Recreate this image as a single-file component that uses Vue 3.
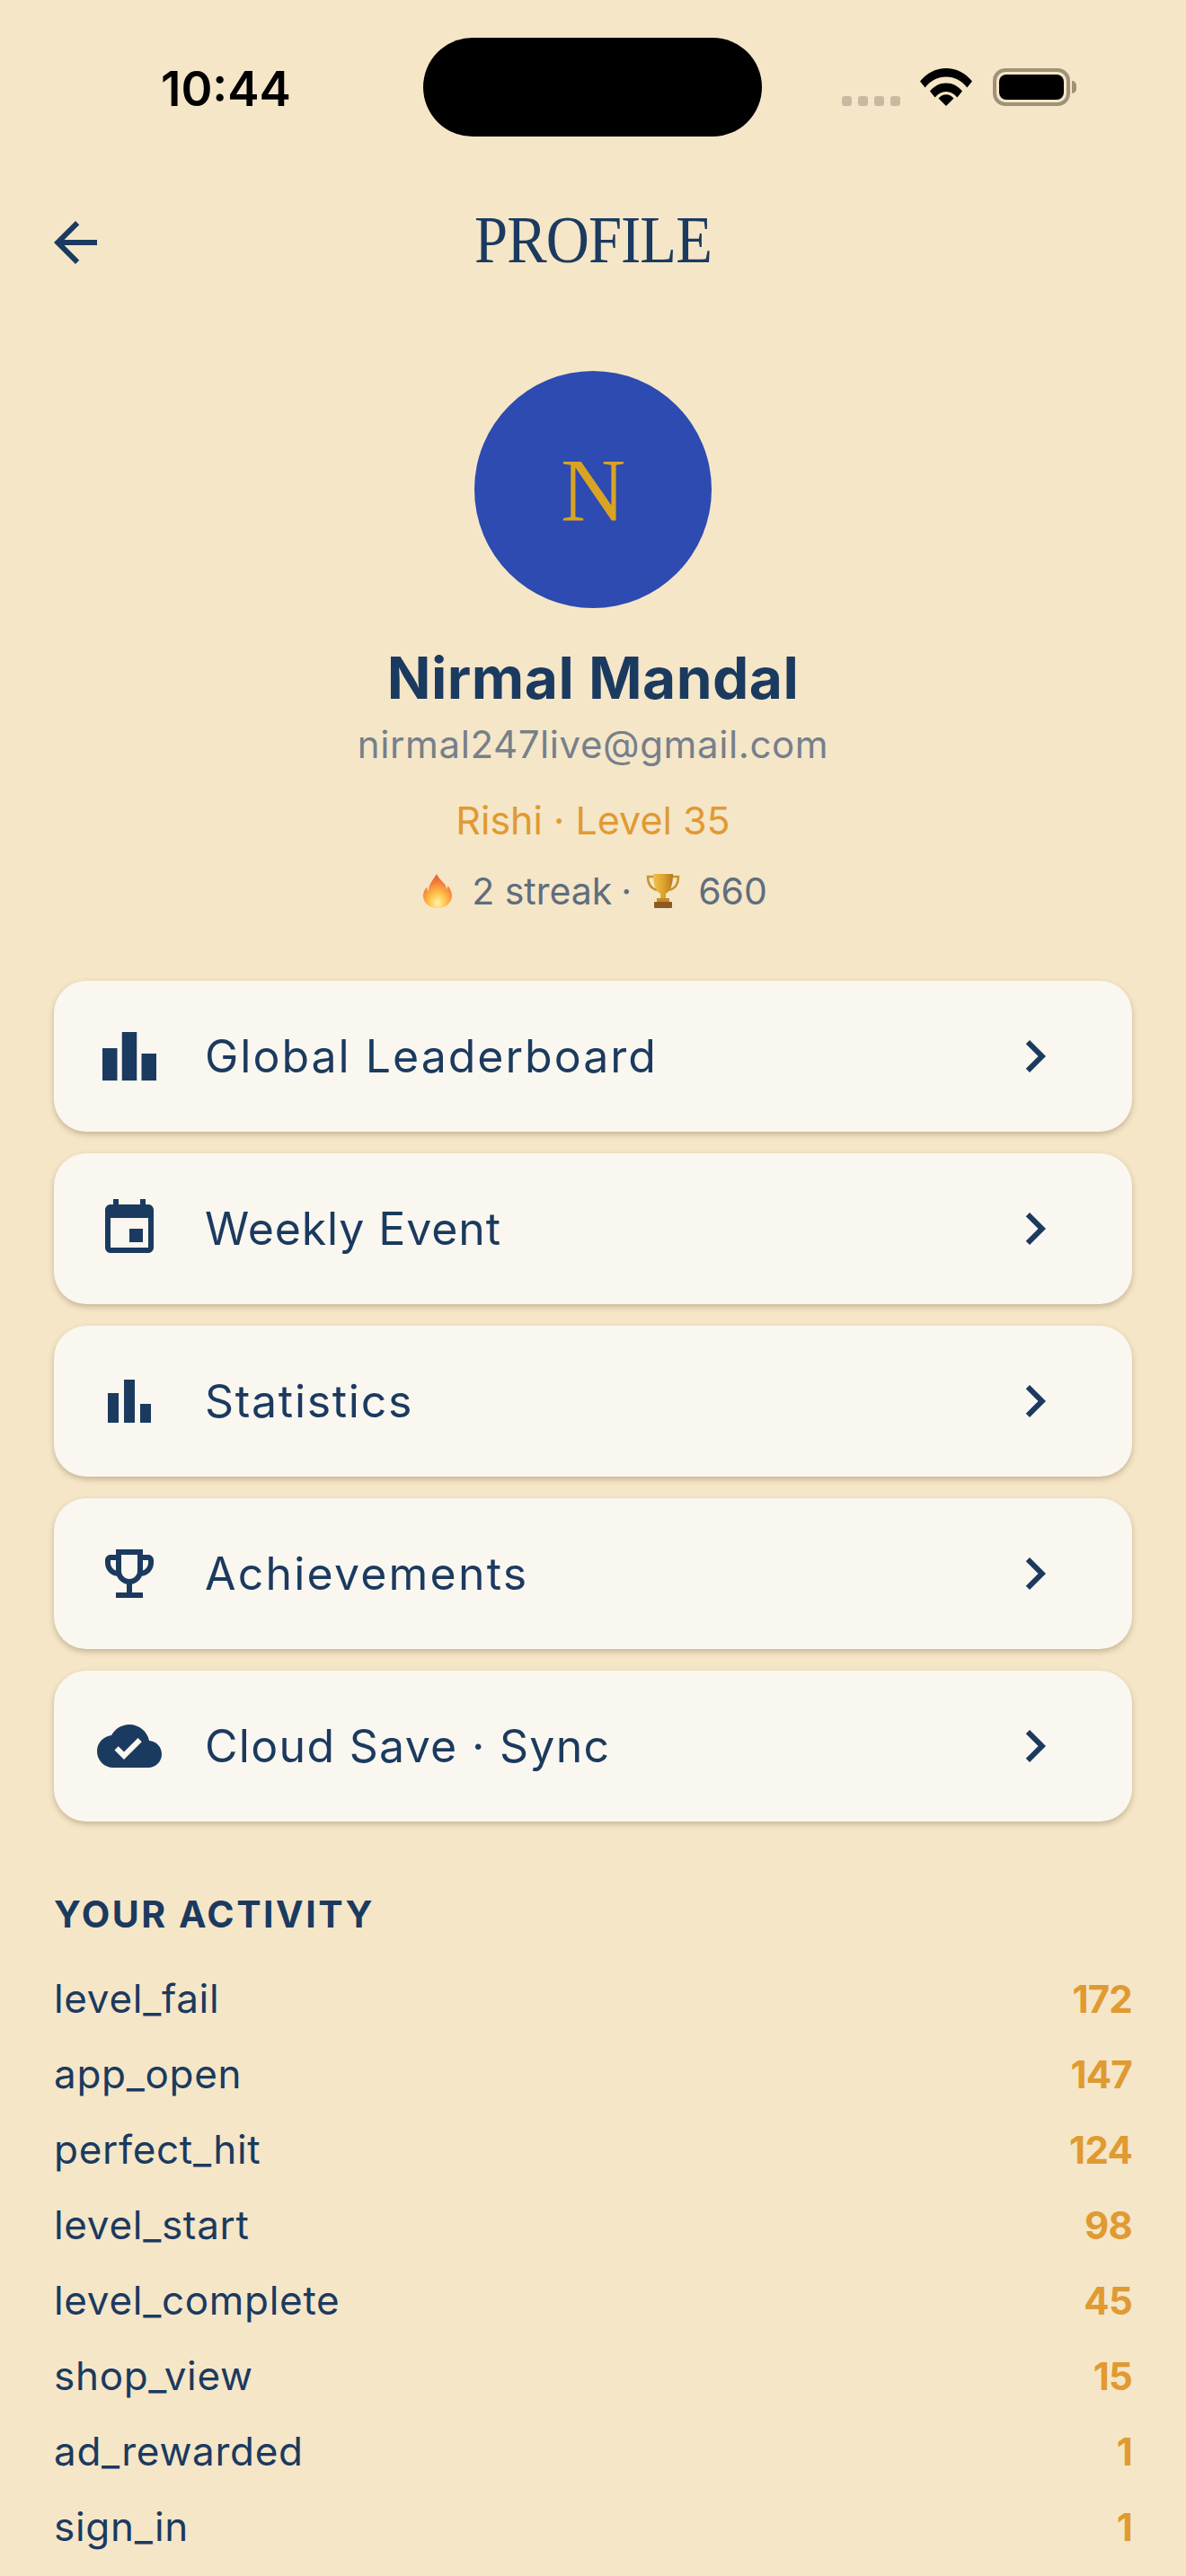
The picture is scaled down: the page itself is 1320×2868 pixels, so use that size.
<template>
  <div class="screen">
    <!-- status bar -->
    <div class="status-bar">
      <span class="clock">10:44</span>
      <div class="island"></div>
      <div class="status-icons">
        <div class="signal">
          <i v-for="n in 4" :key="n"></i>
        </div>
        <svg class="wifi" width="58" height="42" viewBox="0 0 58 42">
          <path d="M0 14.5C7.6 5 18 0 29 0s21.4 5 29 14.5l-5.6 7C46.2 13.8 38 9.6 29 9.6S11.800 13.800 5.600 21.500z" />
          <path d="M11 25.500C15.600 19.800 22 16.500 29 16.500s13.400 3.300 18 9l-5.600 6.900C38 28.300 33.800 26 29 26s-9 2.300-12.400 6.400z" />
          <path d="M20.500 33.500C22.800 30.800 25.800 29.300 29 29.300s6.200 1.500 8.500 4.200L29 42z" />
        </svg>
        <div class="battery">
          <div class="battery-level"></div>
          <div class="battery-nub"></div>
        </div>
      </div>
    </div>

    <!-- header -->
    <header class="top-bar">
      <svg class="back" viewBox="0 0 24 24" width="72" height="72">
        <path d="M20 11H7.830l5.590-5.590L12 4l-8 8 8 8 1.410-1.410L7.830 13H20v-2z" />
      </svg>
      <h1 class="title">PROFILE</h1>
    </header>

    <!-- profile -->
    <section class="profile">
      <div class="avatar">N</div>
      <h2 class="name">Nirmal Mandal</h2>
      <p class="email">nirmal247live@gmail.com</p>
      <p class="rank">Rishi · Level 35</p>
      <p class="streak">
        <svg class="emoji flame" width="32" height="38" viewBox="0 0 34 38" preserveAspectRatio="none">
          <defs>
            <radialGradient id="flameFill" cx="0.5" cy="0.85" r="0.85">
              <stop offset="0" stop-color="#fff3a8" />
              <stop offset="0.35" stop-color="#ffc24a" />
              <stop offset="0.7" stop-color="#f5803a" />
              <stop offset="1" stop-color="#e2553a" />
            </radialGradient>
          </defs>
          <path fill="url(#flameFill)" d="M16 0c2 5 7 8 10 12 1 1.500 1.500 3 1.500 5 1-1 1.500-2.500 1.500-4 3 3.500 5 7 5 11.500C34 32 27 38 17 38S0 32 0 24.500c0-4.500 2-7.500 4.500-10 0 2 .5 3.500 2 4.500C6 12 11 7.500 16 0z" />
        </svg>
        <span class="streak-text">2 streak</span>
        <span class="streak-dot">·</span>
        <svg class="emoji cup" width="38" height="40" viewBox="0 0 38 40">
          <defs>
            <linearGradient id="cupFill" x1="0" x2="1" y1="0" y2="0">
              <stop offset="0" stop-color="#f0c04e" />
              <stop offset="0.5" stop-color="#e0a52e" />
              <stop offset="1" stop-color="#b57a1c" />
            </linearGradient>
          </defs>
          <path fill="none" stroke="#c9952a" stroke-width="2.500" d="M9 4H2c0 7 3 13 10 15M29 4h7c0 7-3 13-10 15" />
          <path fill="url(#cupFill)" d="M8 1h22c0 10-2 19-8 22v5h-6v-5C10 20 8 11 8 1z" />
          <rect x="12" y="28" width="14" height="4" fill="#c48c28" />
          <rect x="9" y="32" width="20" height="7" rx="1" fill="#8f5a22" />
        </svg>
        <span class="streak-text">660</span>
      </p>
    </section>

    <!-- menu -->
    <nav class="menu">
      <div v-for="item in menu" :key="item.label" class="card">
        <svg class="card-icon" viewBox="0 0 24 24" width="72" height="72">
          <path :d="item.icon" />
        </svg>
        <span class="card-label" :style="{ letterSpacing: item.spacing }">{{ item.label }}</span>
        <svg class="chevron" viewBox="0 0 24 24" width="72" height="72">
          <path d="M10 6L8.590 7.410 13.170 12l-4.580 4.590L10 18l6-6z" />
        </svg>
      </div>
    </nav>

    <!-- activity -->
    <section class="activity">
      <h3 class="activity-title">YOUR ACTIVITY</h3>
      <div v-for="row in activity" :key="row.name" class="activity-row">
        <span class="activity-name">{{ row.name }}</span>
        <span class="activity-count">{{ row.count }}</span>
      </div>
    </section>
  </div>
</template>

<script setup>
const menu = [
  {
    label: 'Global Leaderboard',
    spacing: '2px',
    icon: 'M7.500 21H2V9h5.500v12zm7.250-18h-5.500v18h5.500V3zM22 11h-5.500v10H22V11z'
  },
  {
    label: 'Weekly Event',
    spacing: '0.9px',
    icon: 'M17 12h-5v5h5v-5zM16 1v2H8V1H6v2H5c-1.110 0-1.990.9-1.990 2L3 19c0 1.100.89 2 2 2h14c1.100 0 2-.9 2-2V5c0-1.100-.9-2-2-2h-1V1h-2zm3 18H5V8h14v11z'
  },
  {
    label: 'Statistics',
    spacing: '1.7px',
    icon: 'M4 9h4v11H4zM16 13h4v7h-4zM10 4h4v16h-4z'
  },
  {
    label: 'Achievements',
    spacing: '2.2px',
    icon: 'M19 5h-2V3H7v2H5c-1.100 0-2 .9-2 2v1c0 2.550 1.920 4.630 4.390 4.940.63 1.500 1.980 2.630 3.610 2.960V19H7v2h10v-2h-4v-3.100c1.630-.33 2.980-1.460 3.610-2.960C19.080 12.630 21 10.550 21 8V7c0-1.100-.9-2-2-2zM5 8V7h2v3.820C5.840 10.400 5 9.300 5 8zm7 6c-1.650 0-3-1.350-3-3V5h6v6c0 1.650-1.350 3-3 3zm7-6c0 1.300-.84 2.400-2 2.820V7h2v1z'
  },
  {
    label: 'Cloud Save · Sync',
    spacing: '1.3px',
    icon: 'M19.350 10.040C18.670 6.590 15.640 4 12 4 9.110 4 6.600 5.640 5.350 8.040 2.340 8.360 0 10.910 0 14c0 3.310 2.690 6 6 6h13c2.760 0 5-2.240 5-5 0-2.640-2.050-4.780-4.650-4.960zM10 17l-3.500-3.500 1.410-1.410L10 14.170 15.180 9l1.410 1.410L10 17z'
  }
]

const activity = [
  { name: 'level_fail', count: 172 },
  { name: 'app_open', count: 147 },
  { name: 'perfect_hit', count: 124 },
  { name: 'level_start', count: 98 },
  { name: 'level_complete', count: 45 },
  { name: 'shop_view', count: 15 },
  { name: 'ad_rewarded', count: 1 },
  { name: 'sign_in', count: 1 }
]
</script>

<style>
html, body {
  margin: 0;
  background: #f5e6c8;
}
</style>

<style scoped>
.screen {
  width: 1320px;
  height: 2868px;
  overflow: hidden;
  background: #f5e6c8;
  color: #1b3a5f;
  font-family: Inter, 'Noto Sans', sans-serif;
}

/* status bar */
.status-bar {
  display: flex;
  align-items: center;
  height: 110px;
  padding-top: 42px;
}
.clock {
  width: 471px;
  box-sizing: border-box;
  padding-left: 179px;
  font-size: 53px;
  font-weight: 600;
  color: #000;
  line-height: 110px;
  margin-top: 3px;
}
.island {
  width: 377px;
  height: 110px;
  border-radius: 55px;
  background: #000;
}
.status-icons {
  display: flex;
  align-items: flex-end;
  margin-left: 89px;
  height: 42px;
  margin-top: -1px;
}
.signal {
  display: flex;
  gap: 7px;
  margin-bottom: 0;
  width: 87px;
}
.signal i {
  width: 11px;
  height: 11px;
  border-radius: 3px;
  background: #c9b9a0;
}
.wifi {
  fill: #000;
  margin-right: 23px;
}
.battery {
  position: relative;
  box-sizing: border-box;
  width: 86px;
  height: 42px;
  border: 4px solid #a09278;
  border-radius: 14px;
  padding: 3px;
}
.battery-level {
  height: 100%;
  background: #000;
  border-radius: 8px;
}
.battery-nub {
  position: absolute;
  right: -11px;
  top: 10px;
  width: 5px;
  height: 14px;
  background: #a09278;
  border-radius: 0 5px 5px 0;
}

/* header */
.top-bar {
  position: relative;
  display: flex;
  align-items: center;
  height: 120px;
  margin-top: 58px;
  padding-left: 48px;
}
.back {
  fill: #1b3a5f;
}
.title {
  position: absolute;
  left: 0;
  right: 0;
  margin: 0;
  padding-bottom: 6px;
  text-align: center;
  font-family: 'Liberation Serif', serif;
  font-size: 74px;
  font-weight: 400;
  letter-spacing: -1px;
  transform: scaleX(0.9);
  color: #1b3a5f;
}

/* profile */
.profile {
  display: flex;
  flex-direction: column;
  align-items: center;
  margin-top: 83px;
}
.avatar {
  display: flex;
  align-items: center;
  justify-content: center;
  width: 264px;
  height: 264px;
  border-radius: 50%;
  background: #2d4bb0;
  color: #d9a323;
  font-family: 'Liberation Serif', serif;
  font-size: 100px;
}
.name {
  margin: 38px 0 0;
  font-size: 64px;
  line-height: 80px;
  font-weight: 700;
  letter-spacing: 0.5px;
  color: #1b3a5f;
}
.email {
  margin: 4px 0 0;
  font-size: 42px;
  line-height: 60px;
  letter-spacing: 0.6px;
  color: #76808a;
}
.rank {
  margin: 24px 0 0;
  font-size: 43px;
  line-height: 60px;
  color: #e09a32;
}
.streak {
  display: flex;
  align-items: center;
  margin: 21px 0 0;
  padding-left: 5px;
  font-size: 41px;
  line-height: 56px;
  color: #5f6e7c;
}
.flame {
  margin-right: 22px;
}
.streak-dot {
  margin: 0 16px 0 10px;
}
.cup {
  margin-right: 20px;
}

/* menu */
.menu {
  display: flex;
  flex-direction: column;
  gap: 24px;
  margin: 72px 60px 0;
}
.card {
  display: flex;
  align-items: center;
  height: 168px;
  padding: 0 72px 0 48px;
  border-radius: 36px;
  background: #faf7f0;
  box-shadow: 0 3px 6px rgba(90, 70, 30, 0.3);
}
.card-icon {
  flex: none;
  fill: #1b3a5f;
  margin-right: 48px;
}
.card-label {
  flex: 1;
  font-size: 50px;
  color: #1b3a5f;
}
.chevron {
  flex: none;
  fill: #1b3a5f;
}

/* activity */
.activity {
  margin: 73px 60px 0;
}
.activity-title {
  margin: 0 0 22px;
  font-size: 41px;
  line-height: 60px;
  font-weight: 700;
  letter-spacing: 2.500px;
  color: #1b3a5f;
}
.activity-row {
  display: flex;
  justify-content: space-between;
  align-items: center;
  height: 84px;
  font-size: 44px;
  letter-spacing: 0.7px;
  color: #1b3a5f;
}
.activity-count {
  font-size: 42px;
  font-weight: 700;
  letter-spacing: -0.8px;
  color: #e09a32;
}
</style>
